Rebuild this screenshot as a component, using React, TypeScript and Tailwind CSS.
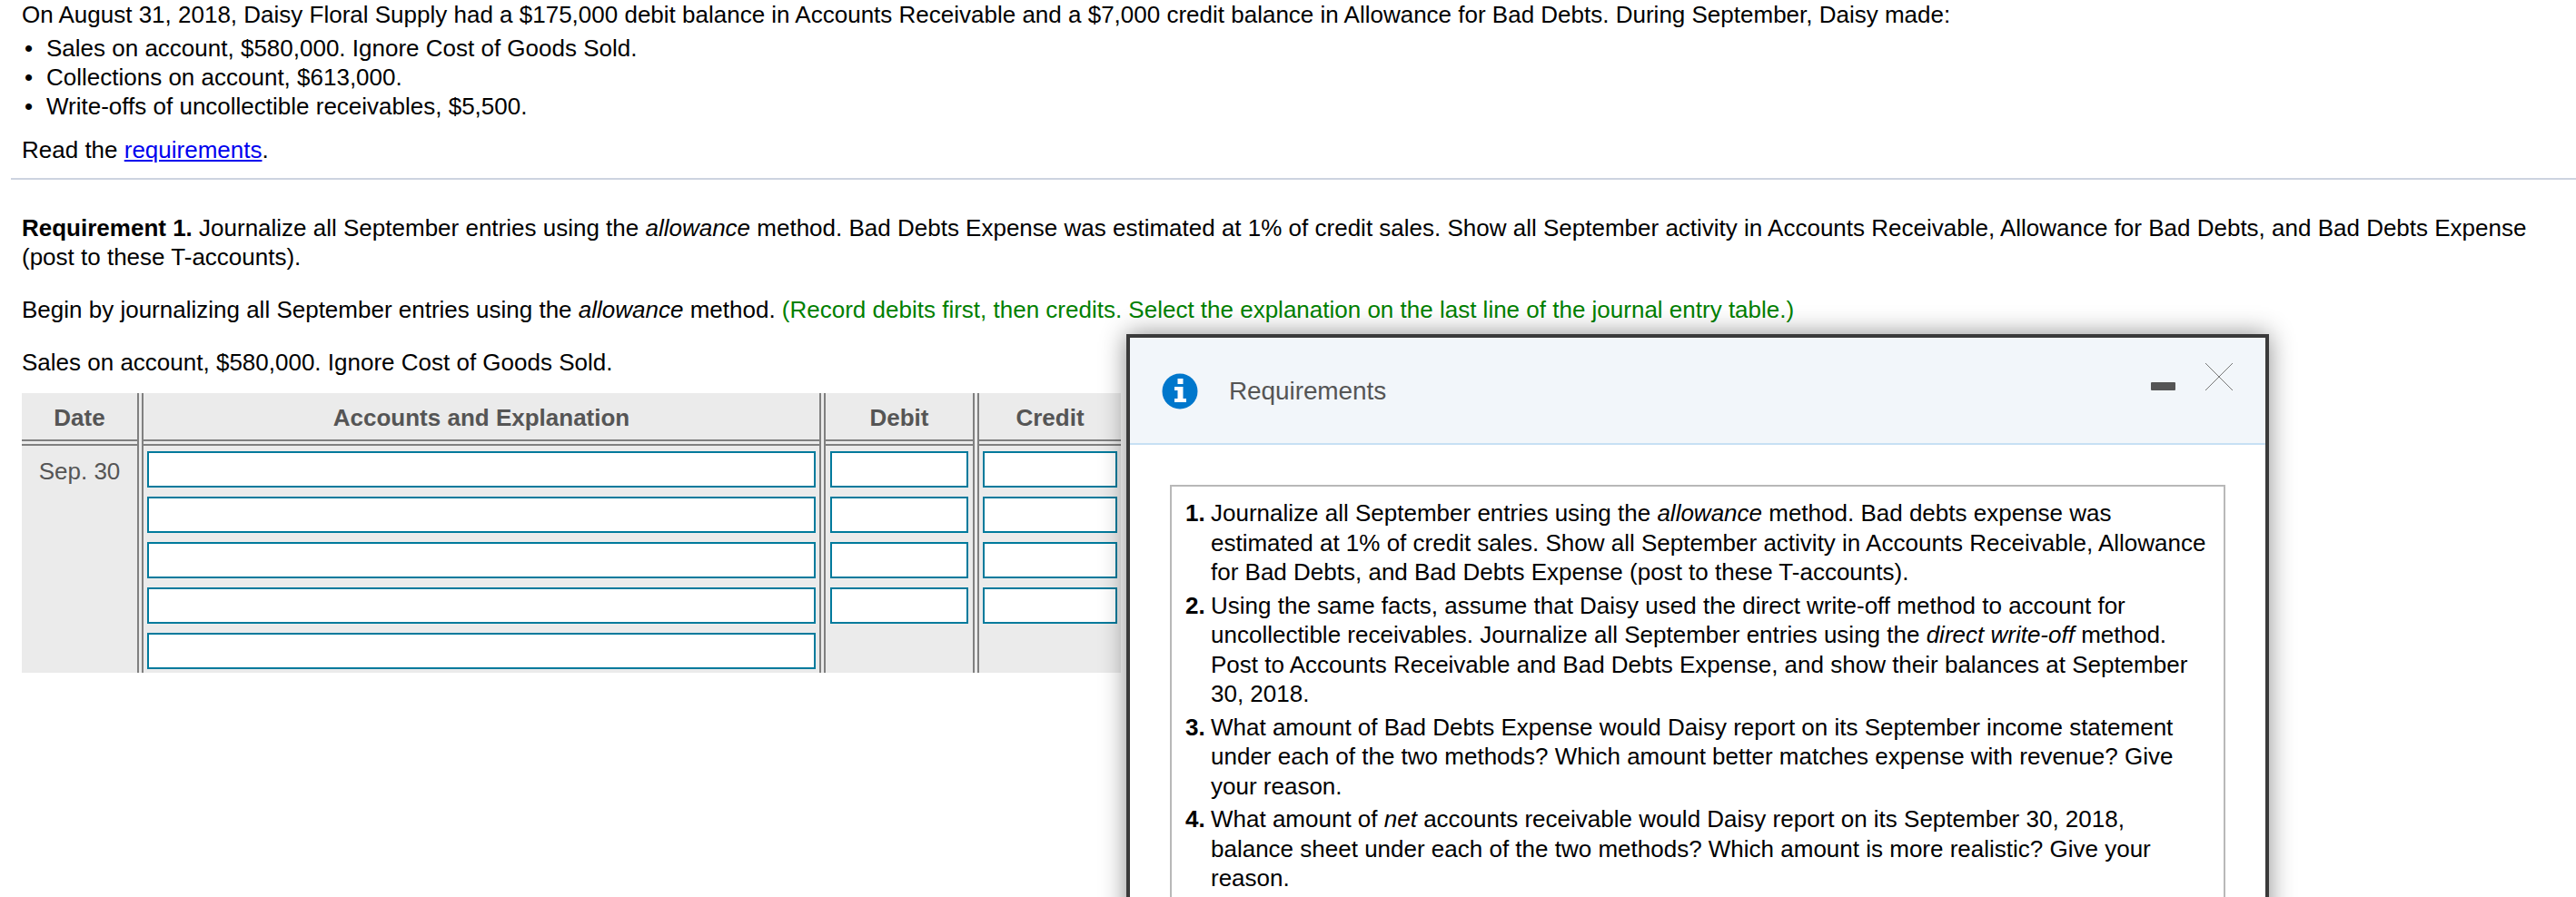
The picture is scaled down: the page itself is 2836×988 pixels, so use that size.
import React from "react";

const inputCls = "block w-full h-[40px] border-2 border-[#007a9c] bg-white outline-none";

function Inputs({ n, cls }: { n: number; cls: string }) {
  return (
    <div className={`flex flex-col gap-[10px] pt-[6px] pb-[4px] flex-1 ${cls}`}>
      {Array.from({ length: n }).map((_, i) => (
        <input key={i} type="text" aria-label="entry" className={inputCls} />
      ))}
    </div>
  );
}

function Head({ children }: { children: React.ReactNode }) {
  return (
    <div className="h-[58px] shrink-0 flex items-center justify-center pt-[3px] border-b-[7px] border-double border-[#808080] font-bold text-[#555555]">
      {children}
    </div>
  );
}

function Item({ n, children }: { n: number; children: React.ReactNode }) {
  return (
    <li className="flex">
      <span className="w-[28px] shrink-0 font-bold">{n}.</span>
      <span className="flex-1">{children}</span>
    </li>
  );
}

export default function App() {
  return (
    <div className="relative h-[988px] w-[2836px] overflow-hidden bg-white text-black text-[26px] leading-[32px] font-['Liberation_Sans',Arial,sans-serif]">
      <div className="pl-[24px] pt-[0px]">
        <p>
          On August 31, 2018, Daisy Floral Supply had a $175,000 debit balance in Accounts Receivable and a $7,000 credit balance in Allowance for Bad Debts. During September, Daisy made:
        </p>
        <ul className="mt-[5px]">
          {[
            "Sales on account, $580,000. Ignore Cost of Goods Sold.",
            "Collections on account, $613,000.",
            "Write-offs of uncollectible receivables, $5,500.",
          ].map((t) => (
            <li key={t} className="flex">
              <span className="w-[27px] shrink-0 pl-[3px]">•</span>
              <span>{t}</span>
            </li>
          ))}
        </ul>
        <p className="mt-[16px]">
          Read the <a href="#" className="text-[#0000ee] underline">requirements</a>.
        </p>
      </div>
      <div className="ml-[12px] mt-[15px] h-[2px] bg-[#cdd3e0]" />
      <div className="pl-[24px] pr-[40px]">
        <p className="mt-[37px]">
          <b>Requirement 1.</b> Journalize all September entries using the <i>allowance</i> method. Bad Debts Expense was estimated at 1% of credit sales. Show all September activity in Accounts Receivable, Allowance for Bad Debts, and Bad Debts Expense (post to these T-accounts).
        </p>
        <p className="mt-[26px]">
          Begin by journalizing all September entries using the <i>allowance</i> method.{" "}
          <span className="text-[#008000]">(Record debits first, then credits. Select the explanation on the last line of the journal entry table.)</span>
        </p>
        <p className="mt-[26px]">Sales on account, $580,000. Ignore Cost of Goods Sold.</p>
        <div className="mt-[18px] flex w-[1210px] h-[308px] bg-[#ebebeb]">
          <div className="w-[134px] flex flex-col border-r-[7px] border-double border-[#808080]">
            <Head>Date</Head>
            <div className="pt-[12px] text-center text-[#555555]">Sep. 30</div>
          </div>
          <div className="w-[751px] flex flex-col border-r-[7px] border-double border-[#808080]">
            <Head>Accounts and Explanation</Head>
            <Inputs n={5} cls="px-[4px]" />
          </div>
          <div className="w-[169px] flex flex-col border-r-[7px] border-double border-[#808080]">
            <Head>Debit</Head>
            <Inputs n={4} cls="px-[5px]" />
          </div>
          <div className="w-[156px] flex flex-col">
            <Head>Credit</Head>
            <Inputs n={4} cls="px-[4px]" />
          </div>
        </div>
      </div>

      <div className="absolute left-[1240px] top-[368px] w-[1258px] h-[760px] bg-white border-[4px] border-[#3a3a3a] shadow-[0_0_26px_rgba(0,0,0,0.45)]">
        <div className="relative h-[118px] bg-[#f2f6fa] border-b-2 border-[#c7e0f4] flex items-center pl-[35px] pt-[1px]">
          <svg width="40" height="40" viewBox="0 0 40 40" className="shrink-0">
            <circle cx="20" cy="20" r="19.5" fill="#0077cc" />
            <rect x="17.5" y="6" width="6" height="6" fill="#fff" />
            <path d="M14 15h9.5v13H27v4H14v-4h3.5v-9H14z" fill="#fff" />
          </svg>
          <span className="ml-[34px] text-[28px] tracking-[-0.1px] text-[#555555]">Requirements</span>
          <div className="absolute left-[1124px] top-[49px] w-[27px] h-[9px] rounded-[1px] bg-[#555555]" />
          <svg width="32" height="32" viewBox="0 0 32 32" className="absolute left-[1183px] top-[27px]">
            <path d="M1 1l30 30M31 1L1 31" stroke="#777777" strokeWidth="1" fill="none" />
          </svg>
        </div>
        <div className="mt-[44px] ml-[44px] w-[1162px] h-[600px] border-2 border-[#b8b8b8] pl-[15px] pr-[17px] pt-[13px] leading-[32.5px]">
          <ol className="flex flex-col gap-[4px]">
            <Item n={1}>
              Journalize all September entries using the <i>allowance</i> method. Bad debts expense was estimated at 1% of credit sales. Show all September activity in Accounts Receivable, Allowance for Bad Debts, and Bad Debts Expense (post to these T-accounts).
            </Item>
            <Item n={2}>
              Using the same facts, assume that Daisy used the direct write-off method to account for uncollectible receivables. Journalize all September entries using the <i>direct write-off</i> method. Post to Accounts Receivable and Bad Debts Expense, and show their balances at September 30, 2018.
            </Item>
            <Item n={3}>
              What amount of Bad Debts Expense would Daisy report on its September income statement under each of the two methods? Which amount better matches expense with revenue? Give your reason.
            </Item>
            <Item n={4}>
              What amount of <i>net</i> accounts receivable would Daisy report on its September 30, 2018, balance sheet under each of the two methods? Which amount is more realistic? Give your reason.
            </Item>
          </ol>
        </div>
      </div>
    </div>
  );
}
